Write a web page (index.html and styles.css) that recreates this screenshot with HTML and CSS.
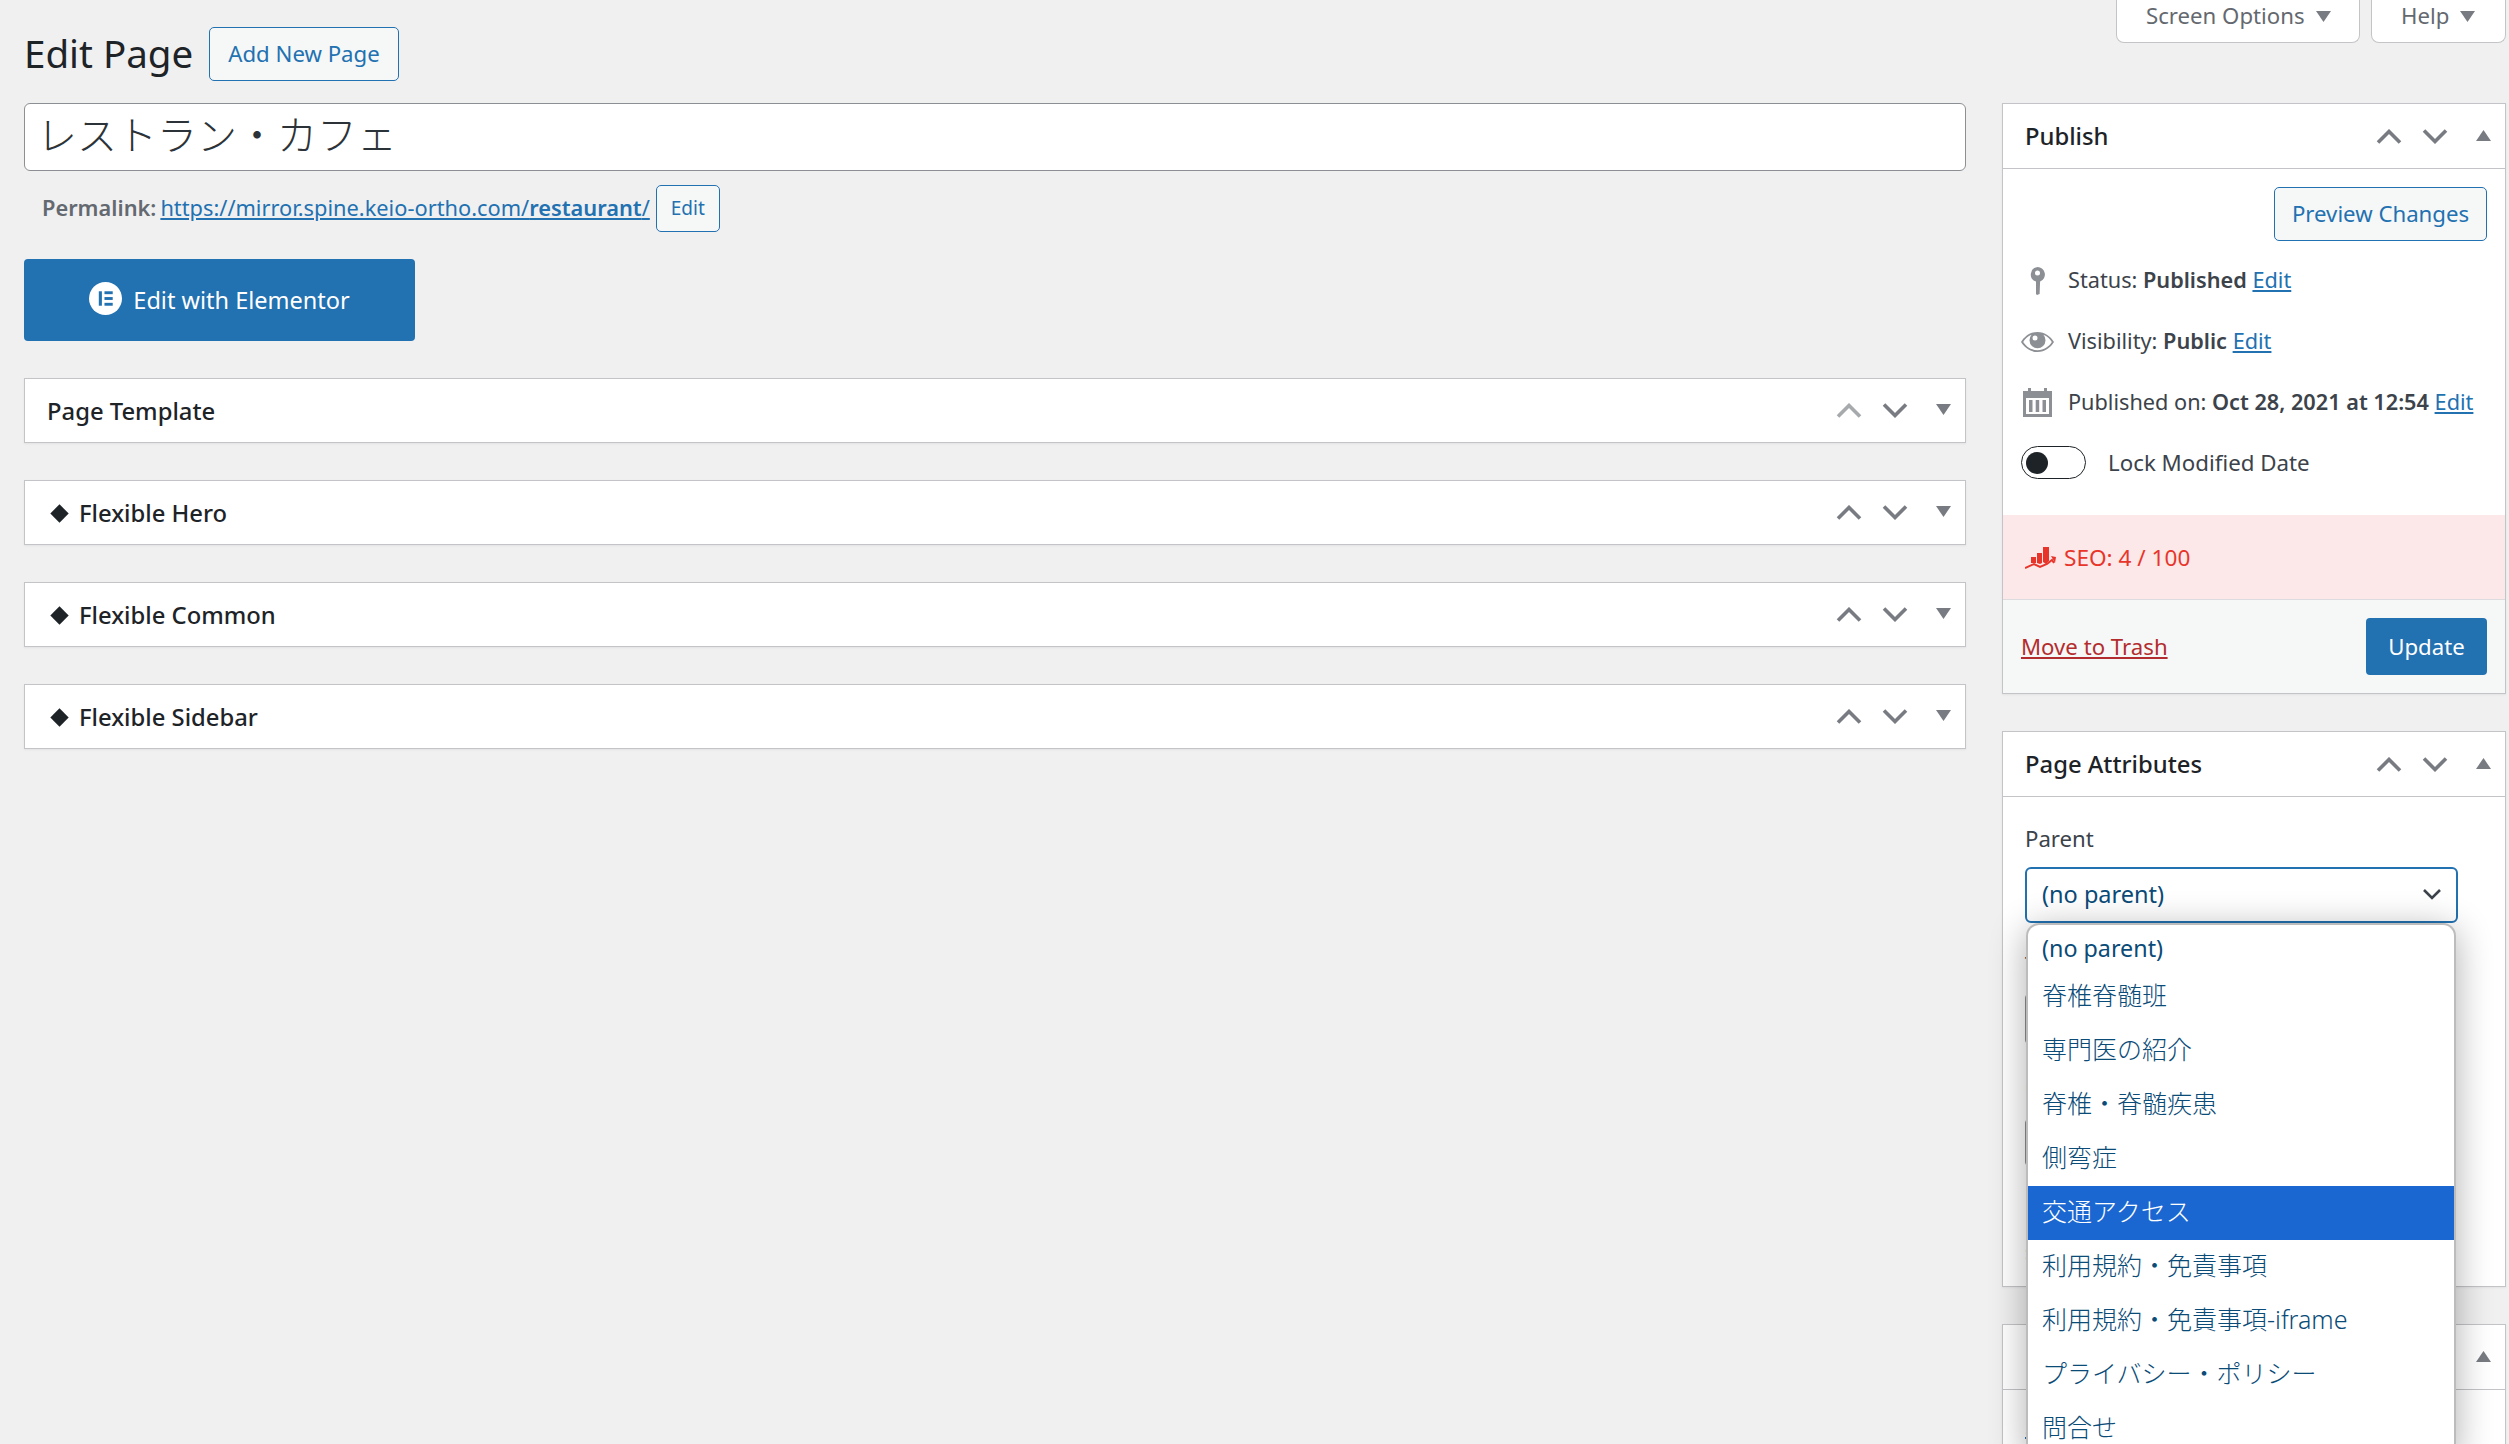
FILE: index.html
```html
<!DOCTYPE html>
<html lang="en">
<head>
<meta charset="utf-8">
<title>Edit Page</title>
<link rel="stylesheet" href="styles.css">
</head>
<body>
<svg class="defs" width="0" height="0" aria-hidden="true">
  <symbol id="up" viewBox="0 0 26 15"><polyline points="2,13.5 13,2.5 24,13.5" fill="none" stroke="currentColor" stroke-width="3.6"/></symbol>
  <symbol id="down" viewBox="0 0 26 15"><polyline points="2,1.5 13,12.5 24,1.5" fill="none" stroke="currentColor" stroke-width="3.6"/></symbol>
  <symbol id="tri-down" viewBox="0 0 15 11"><polygon points="0,0 15,0 7.5,11" fill="currentColor"/></symbol>
  <symbol id="tri-up" viewBox="0 0 15 11"><polygon points="0,11 15,11 7.5,0" fill="currentColor"/></symbol>
</svg>
<div class="layout">
  <main class="main">
    <div class="heading">
      <h1 class="page-title">Edit Page</h1>
      <a class="btn btn-add">Add New Page</a>
    </div>
    <div class="title-field">レストラン・カフェ</div>
    <div class="permalink">
      <span class="permalink-label">Permalink:</span>
      <a class="link">https://mirror.spine.keio-ortho.com/<b>restaurant</b>/</a>
      <a class="btn btn-small">Edit</a>
    </div>
    <a class="elementor">
      <svg class="el-icon" viewBox="0 0 32 32"><circle cx="16" cy="16" r="16" fill="#fff"/><rect x="9.5" y="9" width="3" height="14" fill="#2271b1"/><rect x="15" y="9" width="8" height="2.8" fill="#2271b1"/><rect x="15" y="14.6" width="8" height="2.8" fill="#2271b1"/><rect x="15" y="20.2" width="8" height="2.8" fill="#2271b1"/></svg>
      <span>Edit with Elementor</span>
    </a>
    <section class="box closed">
      <h2 class="box-title">Page Template</h2>
      <div class="handles"><svg class="chev muted"><use href="#up"/></svg><svg class="chev"><use href="#down"/></svg><svg class="tri"><use href="#tri-down"/></svg></div>
    </section>
    <section class="box closed">
      <h2 class="box-title"><span class="diamond"></span>Flexible Hero</h2>
      <div class="handles"><svg class="chev"><use href="#up"/></svg><svg class="chev"><use href="#down"/></svg><svg class="tri"><use href="#tri-down"/></svg></div>
    </section>
    <section class="box closed">
      <h2 class="box-title"><span class="diamond"></span>Flexible Common</h2>
      <div class="handles"><svg class="chev"><use href="#up"/></svg><svg class="chev"><use href="#down"/></svg><svg class="tri"><use href="#tri-down"/></svg></div>
    </section>
    <section class="box closed">
      <h2 class="box-title"><span class="diamond"></span>Flexible Sidebar</h2>
      <div class="handles"><svg class="chev"><use href="#up"/></svg><svg class="chev"><use href="#down"/></svg><svg class="tri"><use href="#tri-down"/></svg></div>
    </section>
  </main>
  <aside class="side">
    <div class="tabs">
      <a class="tab tab-screen">Screen Options<svg class="tri"><use href="#tri-down"/></svg></a>
      <a class="tab tab-help">Help<svg class="tri"><use href="#tri-down"/></svg></a>
    </div>
    <section class="panel">
      <header class="panel-head">
        <h2 class="box-title">Publish</h2>
        <div class="handles"><svg class="chev"><use href="#up"/></svg><svg class="chev"><use href="#down"/></svg><svg class="tri"><use href="#tri-up"/></svg></div>
      </header>
      <div class="publish-body">
        <div class="preview-row"><a class="btn btn-preview">Preview Changes</a></div>
        <div class="misc">
          <span class="misc-icon"><svg width="15" height="28" viewBox="0 0 15 28"><path fill="#8c8f94" fill-rule="evenodd" d="M7.5 0a7.5 7.5 0 0 1 2.6 14.500L9.600 27 7 28l-1-1V14.600A7.500 7.500 0 0 1 7.500 0zm0 3.500a2.500 2.500 0 1 0 0 5 2.500 2.500 0 0 0 0-5z"/></svg></span>
          <span>Status: <b>Published</b> <a class="link">Edit</a></span>
        </div>
        <div class="misc">
          <span class="misc-icon"><svg width="33" height="20" viewBox="0 0 33 20"><path fill="#8c8f94" fill-rule="evenodd" d="M16.500 0C24 0 29.500 4.500 33 10c-3.500 5.500-9 10-16.500 10S3.500 15.500 0 10C3.500 4.500 9 0 16.500 0zM10.600 2.800C6.800 4.200 4 7 2.200 10c2.800 4.500 7.800 8.200 14.300 8.200S28 14.500 30.800 10C29 7 26.200 4.200 22.400 2.800a8 8 0 1 1-11.800 0zM14 3.500a2.500 2.500 0 1 0 0 5 2.500 2.500 0 0 0 0-5z"/></svg></span>
          <span>Visibility: <b>Public</b> <a class="link">Edit</a></span>
        </div>
        <div class="misc">
          <span class="misc-icon"><svg width="29" height="29" viewBox="0 0 29 29"><path fill="#8c8f94" fill-rule="evenodd" d="M5 0h3v3h13V0h3v3h5v26H0V3h5zM3 10v16h23V10zM6 12h3.500v12H6zm6.700 0h3.500v12h-3.500zm6.800 0H23v12h-3.500z"/></svg></span>
          <span>Published on: <b>Oct 28, 2021 at 12:54</b> <a class="link">Edit</a></span>
        </div>
        <div class="misc misc-lock">
          <span class="toggle"><span class="knob"></span></span>
          <span>Lock Modified Date</span>
        </div>
      </div>
      <div class="seo">
        <svg width="31" height="22" viewBox="0 0 31 22"><path fill="#e8352b" d="M6 10h5v6H6zM12 6h5v10l-2 1-3-1zM18 0h6v14l-3 3-3-2z"/><path fill="none" stroke="#e8352b" stroke-width="2" d="M0 21l9-4 6 3 7-3 5-4 2 3"/><path fill="#e8352b" d="M26 9l5 1-1 6z"/></svg>
        <span>SEO: 4 / 100</span>
      </div>
      <footer class="actions">
        <a class="trash">Move to Trash</a>
        <a class="btn-primary">Update</a>
      </footer>
    </section>
    <section class="panel panel-attrs">
      <header class="panel-head">
        <h2 class="box-title">Page Attributes</h2>
        <div class="handles"><svg class="chev"><use href="#up"/></svg><svg class="chev"><use href="#down"/></svg><svg class="tri"><use href="#tri-up"/></svg></div>
      </header>
      <div class="attrs-body">
        <div class="label label-parent">Parent</div>
        <div class="select-wrap">
          <div class="select">(no parent)
            <svg class="select-arrow" viewBox="0 0 20 12"><polyline points="2,2 10,10 18,2" fill="none" stroke="#3c434a" stroke-width="2.6"/></svg>
          </div>
          <ul class="dropdown">
            <li class="opt opt-first">(no parent)</li>
            <li class="opt">脊椎脊髄班</li>
            <li class="opt">専門医の紹介</li>
            <li class="opt">脊椎・脊髄疾患</li>
            <li class="opt">側弯症</li>
            <li class="opt opt-active">交通アクセス</li>
            <li class="opt">利用規約・免責事項</li>
            <li class="opt">利用規約・免責事項-iframe</li>
            <li class="opt">プライバシー・ポリシー</li>
            <li class="opt">問合せ</li>
          </ul>
        </div>
        <div class="label label-template">Template</div>
        <div class="under-select"></div>
        <div class="label label-order">Order</div>
        <div class="under-input"></div>
        <p class="help">Need help? Use the Help<br>screen title.</p>
      </div>
    </section>
    <section class="panel panel-image">
      <header class="panel-head">
        <h2 class="box-title">Featured Image</h2>
        <div class="handles"><svg class="tri"><use href="#tri-up"/></svg></div>
      </header>
      <div class="image-body"><a class="link">Set featured image</a></div>
    </section>
  </aside>
</div>
</body>
</html>
```
FILE: styles.css
```css
* { box-sizing: border-box; }
html, body { margin: 0; height: 100%; overflow: hidden; }
body {
  background: #f0f0f1;
  color: #3c434a;
  font-family: "Noto Sans", "Noto Sans CJK JP", sans-serif;
  font-size: 22.2px;
  line-height: 1.4;
}
.defs { position: absolute; }
a { text-decoration: none; }
b { font-weight: 600; }
.layout {
  display: grid;
  grid-template-columns: 1942px 504px;
  column-gap: 36px;
  padding-left: 24px;
  align-items: start;
}

/* Main column */
.heading { display: flex; align-items: center; padding-top: 27px; height: 81px; }
.page-title { margin: -2px 0 0; font-size: 38.500px; font-weight: 400; color: #1d2327; line-height: 54px; width: 185px; }
.btn {
  display: flex; align-items: center; justify-content: center;
  background: #f6f7f7; border: 1px solid #2271b1; border-radius: 5px; color: #2271b1;
}
.btn-add { width: 190px; height: 54px; }
.title-field {
  margin-top: 22px; height: 68px; padding-left: 12px;
  background: #fff; border: 1px solid #8c8f94; border-radius: 6px;
  font-size: 40px; font-weight: 300; color: #2c3338; line-height: 62px;
}
.permalink { display: flex; align-items: center; height: 47px; margin-top: 14px; padding-left: 18px; font-size: 21.800px; }
.permalink-label { font-weight: 600; color: #646970; margin-right: 4px; }
.link { color: #2271b1; text-decoration: underline; }
.permalink .link { margin-right: 6px; }
.btn-small { width: 64px; height: 47px; font-size: 19px; }
.elementor {
  display: flex; align-items: center; justify-content: center; gap: 11px;
  width: 391px; height: 82px; margin-top: 27px; padding-top: 1px;
  background: #2271b1; color: #fff; border-radius: 4px; font-size: 23.500px;
}
.el-icon { width: 33px; height: 33px; margin-bottom: 4px; }
.box {
  display: flex; align-items: center; justify-content: space-between;
  height: 65px; background: #fff; border: 1px solid #c3c4c7;
  box-shadow: 0 1px 2px rgba(0,0,0,.06);
}
.closed { margin-top: 37px; padding-left: 22px; }
.box-title { margin: 0; padding-top: 2px; font-size: 23.800px; font-weight: 500; color: #1d2327; display: flex; align-items: center; }
.diamond { width: 13px; height: 13px; margin: 0 13px 0 6px; background: #1d2327; transform: rotate(45deg); }
.handles { display: flex; align-items: center; padding-right: 14px; color: #787c82; }
.chev { width: 26px; height: 15px; margin-right: 20px; display: block; }
.chev.muted { color: #a7aaad; }
.chev + .tri { margin-left: 8px; }
.tri { width: 15px; height: 11px; display: block; color: #787c82; }
.handles .tri { margin-bottom: 2px; }

/* Side column */
.tabs { display: flex; justify-content: flex-end; gap: 11px; height: 43px; }
.tab {
  display: flex; align-items: center; height: 43px; padding-bottom: 10px;
  background: #fff; border: 1px solid #c3c4c7; border-top: 0;
  border-radius: 0 0 8px 8px; color: #646970;
}
.tab-screen { width: 244px; padding-left: 29px; }
.tab-help { width: 135px; padding-left: 29px; }
.tab .tri { margin-left: 11px; }
.panel { background: #fff; border: 1px solid #c3c4c7; box-shadow: 0 1px 2px rgba(0,0,0,.06); margin-top: 60px; }
.panel-head { display: flex; align-items: center; justify-content: space-between; height: 65px; padding-left: 22px; border-bottom: 1px solid #c3c4c7; }
.preview-row { display: flex; justify-content: flex-end; padding: 18px 18px 0 0; margin-bottom: 9px; }
.btn-preview { width: 213px; height: 54px; }
.publish-body { padding-bottom: 21px; }
.misc { display: flex; align-items: center; height: 61px; padding-left: 18px; font-size: 21.700px; }
.misc-icon { width: 33px; margin-right: 14px; display: flex; justify-content: center; }
.misc-lock { padding-bottom: 2px; font-size: 22.300px; }
.toggle { position: relative; width: 65px; height: 33px; margin-right: 22px; background: #fff; border: 1px solid #1d2327; border-radius: 17px; }
.knob { position: absolute; left: 4px; top: 5px; width: 22px; height: 22px; border-radius: 50%; background: #1d2327; }
.seo { display: flex; align-items: center; gap: 8px; height: 85px; padding: 2px 0 0 22px; background: #fce8e8; color: #e8352b; border-bottom: 1px solid #dcdcde; font-size: 22.600px; }
.actions { display: flex; align-items: center; justify-content: space-between; height: 93px; padding: 0 18px; background: #f6f7f7; }
.trash { color: #b32d2e; text-decoration: underline; }
.btn-primary { display: flex; align-items: center; justify-content: center; width: 121px; height: 57px; padding-top: 1px; background: #2271b1; color: #fff; border-radius: 4px; }
.panel-attrs { margin-top: 37px; height: 556px; }
.attrs-body { padding-left: 22px; }
.label { line-height: 30px; }
.label-parent { margin-top: 27px; }
.label-template { margin-top: 27px; }
.label-order { margin-top: 28px; }
.select-wrap { position: relative; margin-top: 13px; width: 433px; }
.select {
  position: relative; height: 56px; padding-left: 15px; line-height: 50px;
  background: #fff; border: 2px solid #2271b1; border-radius: 6px; color: #0a4b78; font-size: 23.500px;
}
.select-arrow { position: absolute; right: 14px; top: 19px; width: 20px; height: 12px; }
.dropdown {
  position: absolute; top: 56px; left: 1px; right: 2px; z-index: 5;
  margin: 0; padding: 0; list-style: none; background: #fff;
  border: 2px solid #bcbcbc; border-bottom: 0; border-radius: 13px 13px 0 0;
  box-shadow: 0 6px 36px rgba(0,0,0,.32);
  color: #0a4b78; font-size: 25px; font-weight: 300;
}
.opt { height: 54px; line-height: 51px; padding-left: 14px; white-space: nowrap; }
.opt-first { height: 45px; line-height: 47px; font-size: 23.300px; font-weight: 400; }
.opt-active { background: #1a67d2; color: #fff; }
.under-select { margin-top: 13px; width: 300px; height: 52px; border: 1px solid #8c8f94; border-radius: 5px; }
.under-input { margin-top: 15px; width: 200px; height: 49px; border: 1px solid #8c8f94; border-radius: 5px; }
.help { margin: 25px 0 0; line-height: 40px; }
.panel-image { margin-top: 37px; height: 140px; }
.image-body { padding: 22px; line-height: 30px; }
```
